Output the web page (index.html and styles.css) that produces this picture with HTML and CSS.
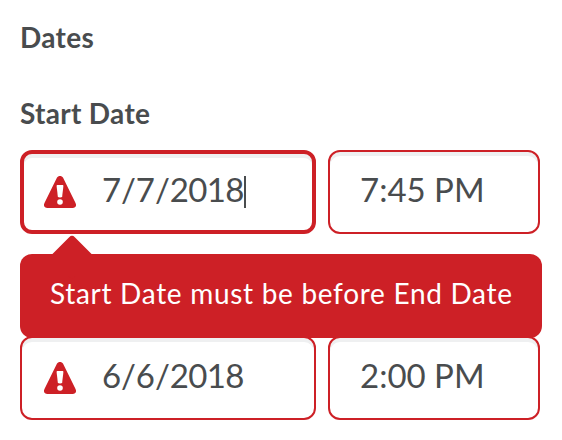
FILE: index.html
```html
<!DOCTYPE html>
<html lang="en">
<head>
<meta charset="utf-8">
<title>Dates</title>
<link rel="stylesheet" href="styles.css">
</head>
<body>
<main class="form">
  <h2 class="heading">Dates</h2>
  <h3 class="label">Start Date</h3>
  <div class="row">
    <div class="field date focused">
      <svg class="warn" viewBox="0 0 32 32"><path class="tri" d="M12.9 1.8C14.3-.6 17.7-.6 19.1 1.8L31.4 26.8C32.9 29.6 31.6 32 28.6 32H3.4C.4 32-.9 29.6.6 26.8Z"/><path class="mark" d="M12.6 10C12.6 9.3 13 9 13.6 9H18.4C19 9 19.4 9.3 19.4 10L18.2 20.2Q17.9 21.6 16 21.6T13.8 20.2Z"/><circle class="mark" cx="16" cy="26" r="2.8"/></svg>
      <span class="value">7/7/<span class="year">2018</span></span><span class="caret"></span>
    </div>
    <div class="field time">7:45 PM</div>
  </div>
  <div class="tooltip">Start Date must be before End Date</div>
  <div class="row">
    <div class="field date">
      <svg class="warn" viewBox="0 0 32 32"><path class="tri" d="M12.9 1.8C14.3-.6 17.7-.6 19.1 1.8L31.4 26.8C32.9 29.6 31.6 32 28.6 32H3.4C.4 32-.9 29.6.6 26.8Z"/><path class="mark" d="M12.6 10C12.6 9.3 13 9 13.6 9H18.4C19 9 19.4 9.3 19.4 10L18.2 20.2Q17.9 21.6 16 21.6T13.8 20.2Z"/><circle class="mark" cx="16" cy="26" r="2.8"/></svg>
      <span class="value">6/6/<span class="year">2018</span></span>
    </div>
    <div class="field time">2:00 PM</div>
  </div>
</main>
</body>
</html>
```
FILE: styles.css
```css
* { box-sizing: border-box; }
body { margin: 0; background: #fff; color: #494c4e; font-family: Lato, sans-serif; }
.form { padding: 19px 20px 0; width: 562px; height: 440px; overflow: hidden; }
.heading, .label { margin: 0; font-size: 28px; line-height: 36px; font-weight: 700; letter-spacing: .3px; }
.label { margin-top: 40px; }
.row { display: flex; gap: 12px; }
.label + .row { margin-top: 19px; }
.field { height: 84px; border: 2px solid #cd2026; border-radius: 12px; display: flex; align-items: center; font-size: 33px; line-height: 40px; padding-bottom: 6px; box-shadow: inset 0 4px 0 #eff0f1; white-space: nowrap; }
.date { width: 296px; padding-left: 22px; letter-spacing: -.1px; }
.year { letter-spacing: -.6px; }
.time { width: 212px; padding-left: 30px; }
.focused { border-width: 4px; padding-left: 20px; }
.warn { width: 32px; height: 32px; margin: 6px 26px 0 0; }
.tri { fill: #cd2026; }
.mark { fill: #fff; }
.caret { width: 2px; height: 32px; margin-top: 6px; background: #494c4e; }
.tooltip { position: relative; z-index: 1; width: 522px; height: 84px; margin: 20px 0 -2px; border-radius: 12px; background: #cd2026; color: #fff; font-size: 28px; line-height: 78px; letter-spacing: .7px; padding-left: 30px; white-space: nowrap; }
.tooltip::before { content: ""; position: absolute; left: 36px; top: -13.4px; width: 32px; height: 32px; border-radius: 4px; background: #cd2026; transform: rotate(45deg); }
```
